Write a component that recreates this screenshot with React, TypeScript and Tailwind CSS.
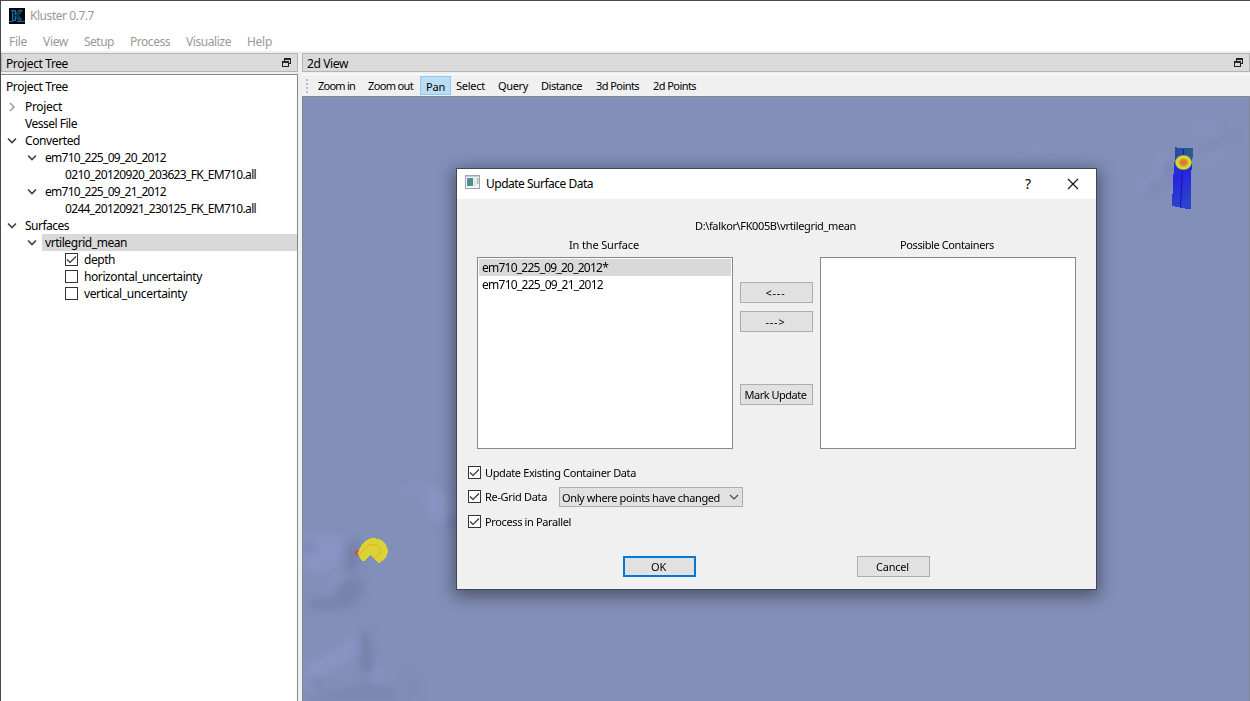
import React, { useLayoutEffect, useRef, useState } from 'react';
import type { ReactNode } from 'react';

/** Single line of text whose letter spacing is adjusted to fill a given width. */
function Fit({ w, className = '', children }: { w: number; className?: string; children: string }) {
  const ref = useRef<HTMLSpanElement>(null);
  const [spacing, setSpacing] = useState(0);
  useLayoutEffect(() => {
    if (ref.current) {
      const natural = ref.current.getBoundingClientRect().width;
      setSpacing((w - natural) / children.length);
    }
  }, [w, children]);
  return (
    <span ref={ref} className={`inline-block shrink-0 whitespace-pre ${className}`} style={{ letterSpacing: `${spacing}px` }}>
      {children}
    </span>
  );
}

function FloatIcon() {
  return (
    <svg width="10" height="10" viewBox="0 0 10 10" fill="none" stroke="#222" shapeRendering="crispEdges">
      <path d="M2 0.5H9M2 1.5H9M2.500 1V3M8.500 1V6M7 5.5H9" />
      <path d="M0 4.5H7M0 3.5H7M0.500 4V9M6.500 4V9M0 8.5H7" />
    </svg>
  );
}

function DockTitle({ title, w }: { title: string; w: number }) {
  return (
    <div className="flex h-[19px] items-center justify-between border border-[#b4b4b4] bg-[#dadada] pr-[5px] pl-1">
      <Fit w={w} className="pt-[3px]">{title}</Fit>
      <FloatIcon />
    </div>
  );
}

function Arrow({ open }: { open?: boolean }) {
  return (
    <svg width="10" height="10" viewBox="0 0 10 10" fill="none" stroke={open ? '#404040' : '#a0a0a0'} strokeWidth="1.6">
      <path d={open ? 'M1 2.5L5 6.5L9 2.5' : 'M3 1L7 5L3 9'} />
    </svg>
  );
}

function Check({ on }: { on?: boolean }) {
  return (
    <span className="flex size-[13px] shrink-0 border border-[#333] bg-white">
      {on && (
        <svg width="11" height="11" viewBox="0 0 11 11" fill="none" stroke="#333" strokeWidth="1.2">
          <path d="M1 5.5L4 8.5L10 2.5" />
        </svg>
      )}
    </span>
  );
}

type Row = { text: string; w: number; pad: string; arrow?: 'open' | 'closed'; check?: boolean; selected?: boolean };

const rows: Row[] = [
  { text: 'Project', w: 37, pad: 'pl-[5px]', arrow: 'closed' },
  { text: 'Vessel File', w: 52, pad: 'pl-[5px]' },
  { text: 'Converted', w: 55, pad: 'pl-[5px]', arrow: 'open' },
  { text: 'em710_225_09_20_2012', w: 121, pad: 'pl-[25px]', arrow: 'open' },
  { text: '0210_20120920_203623_FK_EM710.all', w: 191, pad: 'pl-[45px]' },
  { text: 'em710_225_09_21_2012', w: 121, pad: 'pl-[25px]', arrow: 'open' },
  { text: '0244_20120921_230125_FK_EM710.all', w: 191, pad: 'pl-[45px]' },
  { text: 'Surfaces', w: 44, pad: 'pl-[5px]', arrow: 'open' },
  { text: 'vrtilegrid_mean', w: 82, pad: 'pl-[25px]', arrow: 'open', selected: true },
  { text: 'depth', w: 31, pad: 'pl-[45px]', check: true },
  { text: 'horizontal_uncertainty', w: 118, pad: 'pl-[45px]', check: false },
  { text: 'vertical_uncertainty', w: 103, pad: 'pl-[45px]', check: false },
];

function TreeRow({ text, w, pad, arrow, check, selected }: Row) {
  return (
    <div className={`flex h-[17px] items-center ${pad}`}>
      <span className="flex w-[16px] shrink-0 pl-px">{arrow && <Arrow open={arrow === 'open'} />}</span>
      <span className={`flex h-full flex-1 items-center pl-[3px] ${selected ? 'bg-[#d9d9d9]' : ''}`}>
        {check !== undefined && <span className="mr-1.5 flex"><Check on={check} /></span>}
        <Fit w={w} className="pt-px">{text}</Fit>
      </span>
    </div>
  );
}

function Logo() {
  return (
    <svg width="16" height="16" viewBox="0 0 16 16">
      <rect width="16" height="16" fill="#020406" />
      <path d="M2.500 2.500H6.500V6.500L9.500 2.500H13L9 7.500L12.500 12H9.500L6.500 8.500V12.500H3.500V4.500Z" fill="#06283c" stroke="#1577a8" />
      <path d="M0 13.500H4M8 13.500H16" stroke="#1577a8" />
    </svg>
  );
}

function Seafloor() {
  return (
    <svg className="block size-full" viewBox="303 97 946 604" preserveAspectRatio="none">
      <defs>
        <filter id="soft" x="-60%" y="-60%" width="220%" height="220%"><feGaussianBlur stdDeviation="4" /></filter>
        <radialGradient id="hot">
          <stop offset="0" stopColor="#dc7436" />
          <stop offset="0.4" stopColor="#dc8635" />
          <stop offset="0.58" stopColor="#dfc831" />
          <stop offset="0.85" stopColor="#d8dc32" />
          <stop offset="1" stopColor="#5ba635" />
        </radialGradient>
        <linearGradient id="swath" x1="0" y1="0" x2="0.2" y2="1">
          <stop offset="0" stopColor="#2b3cc0" />
          <stop offset="0.5" stopColor="#2825e0" />
          <stop offset="1" stopColor="#2a42cc" />
        </linearGradient>
        <linearGradient id="cap">
          <stop offset="0" stopColor="#2848ae" />
          <stop offset="1" stopColor="#2c5c8c" />
        </linearGradient>
      </defs>
      <rect x="303" y="97" width="946" height="604" fill="#828fb8" />
      <g filter="url(#soft)">
        <g fill="#8e9bcf" opacity="0.5">
          <path d="M303 535L330 533L350 540L342 560L330 572L345 578L330 590L318 575L303 570Z" />
          <path d="M303 665L330 652L358 633L362 645L350 662L325 675L303 690Z" />
          <path d="M375 660L384 672L376 690L372 680Z" />
          <path d="M395 490L420 484L452 492L456 515L445 530L432 518L425 500Z" />
          <ellipse cx="1163" cy="164" rx="6" ry="14" />
          <ellipse cx="1205" cy="127" rx="13" ry="9" opacity="0.5" />
          <ellipse cx="1143" cy="182" rx="13" ry="5" transform="rotate(-35 1143 182)" opacity="0.6" />
          <ellipse cx="1036" cy="147" rx="12" ry="5" transform="rotate(-25 1036 147)" opacity="0.4" />
          <ellipse cx="1210" cy="160" rx="24" ry="4" transform="rotate(-30 1210 160)" opacity="0.5" />
        </g>
        <g fill="#66749c" opacity="0.5">
          <ellipse cx="310" cy="547" rx="6" ry="5" />
          <path d="M344 543L360 540L358 565L350 575L345 563Z" />
          <path d="M340 582L360 576L366 590L352 608L310 610L308 600L335 597Z" opacity="0.8" />
          <ellipse cx="327" cy="577" rx="7" ry="4" opacity="0.6" />
          <path d="M360 635L368 630L373 655L374 673L361 672Z" />
          <ellipse cx="317" cy="682" rx="7" ry="4" />
          <path d="M303 698L340 690L370 680L395 690L400 701H303Z" opacity="0.6" />
          <ellipse cx="411" cy="690" rx="7" ry="22" opacity="0.2" />
          <ellipse cx="452" cy="522" rx="5" ry="7" />
          <ellipse cx="420" cy="492" rx="7" ry="4" opacity="0.5" />
          <ellipse cx="1168" cy="169" rx="4" ry="9" />
          <ellipse cx="1155" cy="186" rx="12" ry="3" transform="rotate(-35 1155 186)" opacity="0.4" />
          <ellipse cx="1222" cy="142" rx="18" ry="3" transform="rotate(-25 1222 142)" opacity="0.4" />
        </g>
      </g>
      <path d="M358 553L361 546Q366 538 374 538Q386 539 388 550Q388 558 379 563L370 555L365 561Q360 562 358 553Z" fill="#dbd333" shapeRendering="crispEdges" />
      <path d="M354 553L357 549L358 556Z" fill="#e34c2b" />
      <path d="M358 555L368 546Q374 542 380 548Q383 554 374 558" fill="none" stroke="#f0a91d" />
      <path d="M1175 147L1178 148H1193V158L1191.500 159V170L1191 209L1187 209L1172 206L1173 182L1174 166L1175 158Z" fill="url(#swath)" shapeRendering="crispEdges" />
      <path d="M1175 147L1178 148H1193V158H1175Z" fill="url(#cap)" shapeRendering="crispEdges" />
      <path d="M1183.500 149L1180.500 208" stroke="#1414b4" fill="none" />
      <ellipse cx="1183.500" cy="162.500" rx="8.500" ry="7.500" fill="url(#hot)" />
    </svg>
  );
}

const menus: [string, number][] = [['File', 18], ['View', 25], ['Setup', 30], ['Process', 40], ['Visualize', 45], ['Help', 25]];

const tools: [string, number, string][] = [
  ['Zoom in', 37, 'ml-[6px]'],
  ['Zoom out', 45, 'ml-[13px]'],
  ['Pan', 19, 'ml-[7px]'],
  ['Select', 29, 'ml-[5px]'],
  ['Query', 30, 'ml-[13px]'],
  ['Distance', 41, 'ml-[13px]'],
  ['3d Points', 43, 'ml-[14px]'],
  ['2d Points', 43, 'ml-[14px]'],
];

function PushButton({ label, w, primary, className = '' }: { label: string; w: number; primary?: boolean; className?: string }) {
  return (
    <button className={`flex h-[21px] w-[73px] shrink-0 items-center justify-center bg-[#e1e1e1] pr-[2px] ${primary ? 'border-2 border-[#0078d7]' : 'border border-[#adadad]'} ${className}`}>
      <Fit w={w}>{label}</Fit>
    </button>
  );
}

function ListBox({ children, className = '' }: { children?: ReactNode; className?: string }) {
  return <div className={`h-[192px] w-[256px] shrink-0 border border-[#828790] bg-white p-px text-[12px] ${className}`}>{children}</div>;
}

function UpdateDialog() {
  return (
    <div className="absolute top-[167px] left-[455px] flex h-[422px] w-[641px] flex-col border border-[#3f4659] bg-[#f0f0f0] font-['Noto_Sans'] text-[11px] leading-none shadow-[0_4px_16px_2px_rgba(0,0,0,0.42)]">
      <div className="flex h-[30px] shrink-0 items-center bg-white pl-2 text-[12px]">
        <svg width="15" height="14" viewBox="0 0 15 14" className="-mt-1">
          <rect x="0.5" y="0.5" width="14" height="13" fill="#f4f4f4" stroke="#a2a5a8" />
          <path d="M1 1.500H14" stroke="#c9cccf" />
          <rect x="2" y="3" width="6" height="8" fill="#4c8f8b" />
          <rect x="2" y="3" width="3" height="4" fill="#5a86b0" />
          <rect x="8.500" y="3" width="3" height="8" fill="#e3e6e6" />
          <rect x="12" y="3" width="1.500" height="6" fill="#9cc4b4" />
        </svg>
        <Fit w={107} className="ml-1.5">Update Surface Data</Fit>
        <span className="ml-[431px] w-[8px] text-center text-[14px]">?</span>
        <svg width="12" height="12" viewBox="0 0 12 12" stroke="#111" strokeWidth="1.1" className="-mt-px ml-[35px]">
          <path d="M1 1L11 11M11 1L1 11" />
        </svg>
      </div>
      <div className="mt-[19px] flex h-[14px] items-center pl-[238px]">
        <Fit w={161}>{'D:\\falkor\\FK005B\\vrtilegrid_mean'}</Fit>
      </div>
      <div className="mt-[5px] flex h-[14px] items-center">
        <Fit w={70} className="ml-[112px]">In the Surface</Fit>
        <Fit w={94} className="ml-[261px]">Possible Containers</Fit>
      </div>
      <div className="mt-[6px] flex pl-5">
        <ListBox>
          <div className="flex h-[17px] items-center bg-[#d9d9d9] pl-[3px]"><Fit w={126}>em710_225_09_20_2012*</Fit></div>
          <div className="flex h-[17px] items-center pl-[3px]"><Fit w={121}>em710_225_09_21_2012</Fit></div>
        </ListBox>
        <div className="mt-[25px] ml-[7px] flex flex-col">
          <PushButton label="<---" w={20} />
          <PushButton label="--->" w={20} className="mt-2" />
          <PushButton label="Mark Update" w={62} className="mt-[52px]" />
        </div>
        <ListBox className="ml-[7px]" />
      </div>
      <div className="mt-[17px] flex flex-col pl-[11px]">
        <div className="flex h-[13px] items-center gap-1"><Check on /><Fit w={151}>Update Existing Container Data</Fit></div>
        <div className="mt-2 flex h-[20px] items-center gap-1">
          <span className="-mt-px flex items-center gap-1"><Check on /><Fit w={62}>Re-Grid Data</Fit></span>
          <div className="ml-2 flex h-[20px] w-[184px] items-center border border-[#adadad] bg-[#e1e1e1] pt-px pl-[2px]">
            <Fit w={158}>Only where points have changed</Fit>
            <svg width="10" height="7" viewBox="0 0 10 7" fill="none" stroke="#444" strokeWidth="1.1" className="ml-[9px]">
              <path d="M1 1L5 5L9 1" />
            </svg>
          </div>
        </div>
        <div className="mt-2 flex h-[13px] items-center gap-1"><Check on /><Fit w={86}>Process in Parallel</Fit></div>
      </div>
      <div className="mt-[28px] flex pl-[166px]">
        <PushButton label="OK" w={15} primary />
        <PushButton label="Cancel" w={33} className="ml-[161px]" />
      </div>
    </div>
  );
}

export default function App() {
  return (
    <div className="relative flex h-[701px] w-[1250px] flex-col overflow-hidden border-t border-l border-[#4a4a4a] bg-[#f0f0f0] font-['Noto_Sans'] text-[12px] leading-none text-black">
      <header className="h-[50px] shrink-0 bg-white text-[#999]">
        <div className="flex h-[30px] items-center pl-2">
          <Logo />
          <Fit w={64} className="ml-[5px]">Kluster 0.7.7</Fit>
        </div>
        <nav className="flex h-[20px] items-center gap-4 pt-[2px] pl-2">
          {menus.map(([label, w]) => <Fit key={label} w={w}>{label}</Fit>)}
        </nav>
      </header>
      <main className="flex min-h-0 flex-1 pt-[2px]">
        <aside className="flex w-[297px] shrink-0 flex-col">
          <DockTitle title="Project Tree" w={62} />
          <div className="mt-[2px] flex-1 border-t border-r border-[#828790] bg-white">
            <div className="flex h-[23px] items-center pt-px pl-[5px]"><Fit w={62}>Project Tree</Fit></div>
            {rows.map((r) => <TreeRow key={r.text} {...r} />)}
          </div>
        </aside>
        <section className="ml-1 flex min-w-0 flex-1 flex-col">
          <DockTitle title="2d View" w={41} />
          <div className="mt-[2px] flex h-[22px] shrink-0 items-center border-t border-white pl-1 text-[11px]">
            <span className="flex w-[6px] flex-col gap-[2px]">
              {[0, 1, 2, 3].map((i) => <i key={i} className="size-[2px] bg-[#bdbdbd]" />)}
            </span>
            {tools.map(([label, w, gap]) =>
              label === 'Pan' ? (
                <span key={label} className={`flex h-[19px] w-[31px] items-center justify-center border border-[#90c8f6] bg-[#bcdcf4] pt-[2px] ${gap}`}>
                  <Fit w={w}>{label}</Fit>
                </span>
              ) : (
                <Fit key={label} w={w} className={gap}>{label}</Fit>
              ),
            )}
          </div>
          <div className="min-h-0 flex-1 border-x border-t border-[#828790]"><Seafloor /></div>
        </section>
      </main>
      <UpdateDialog />
    </div>
  );
}
